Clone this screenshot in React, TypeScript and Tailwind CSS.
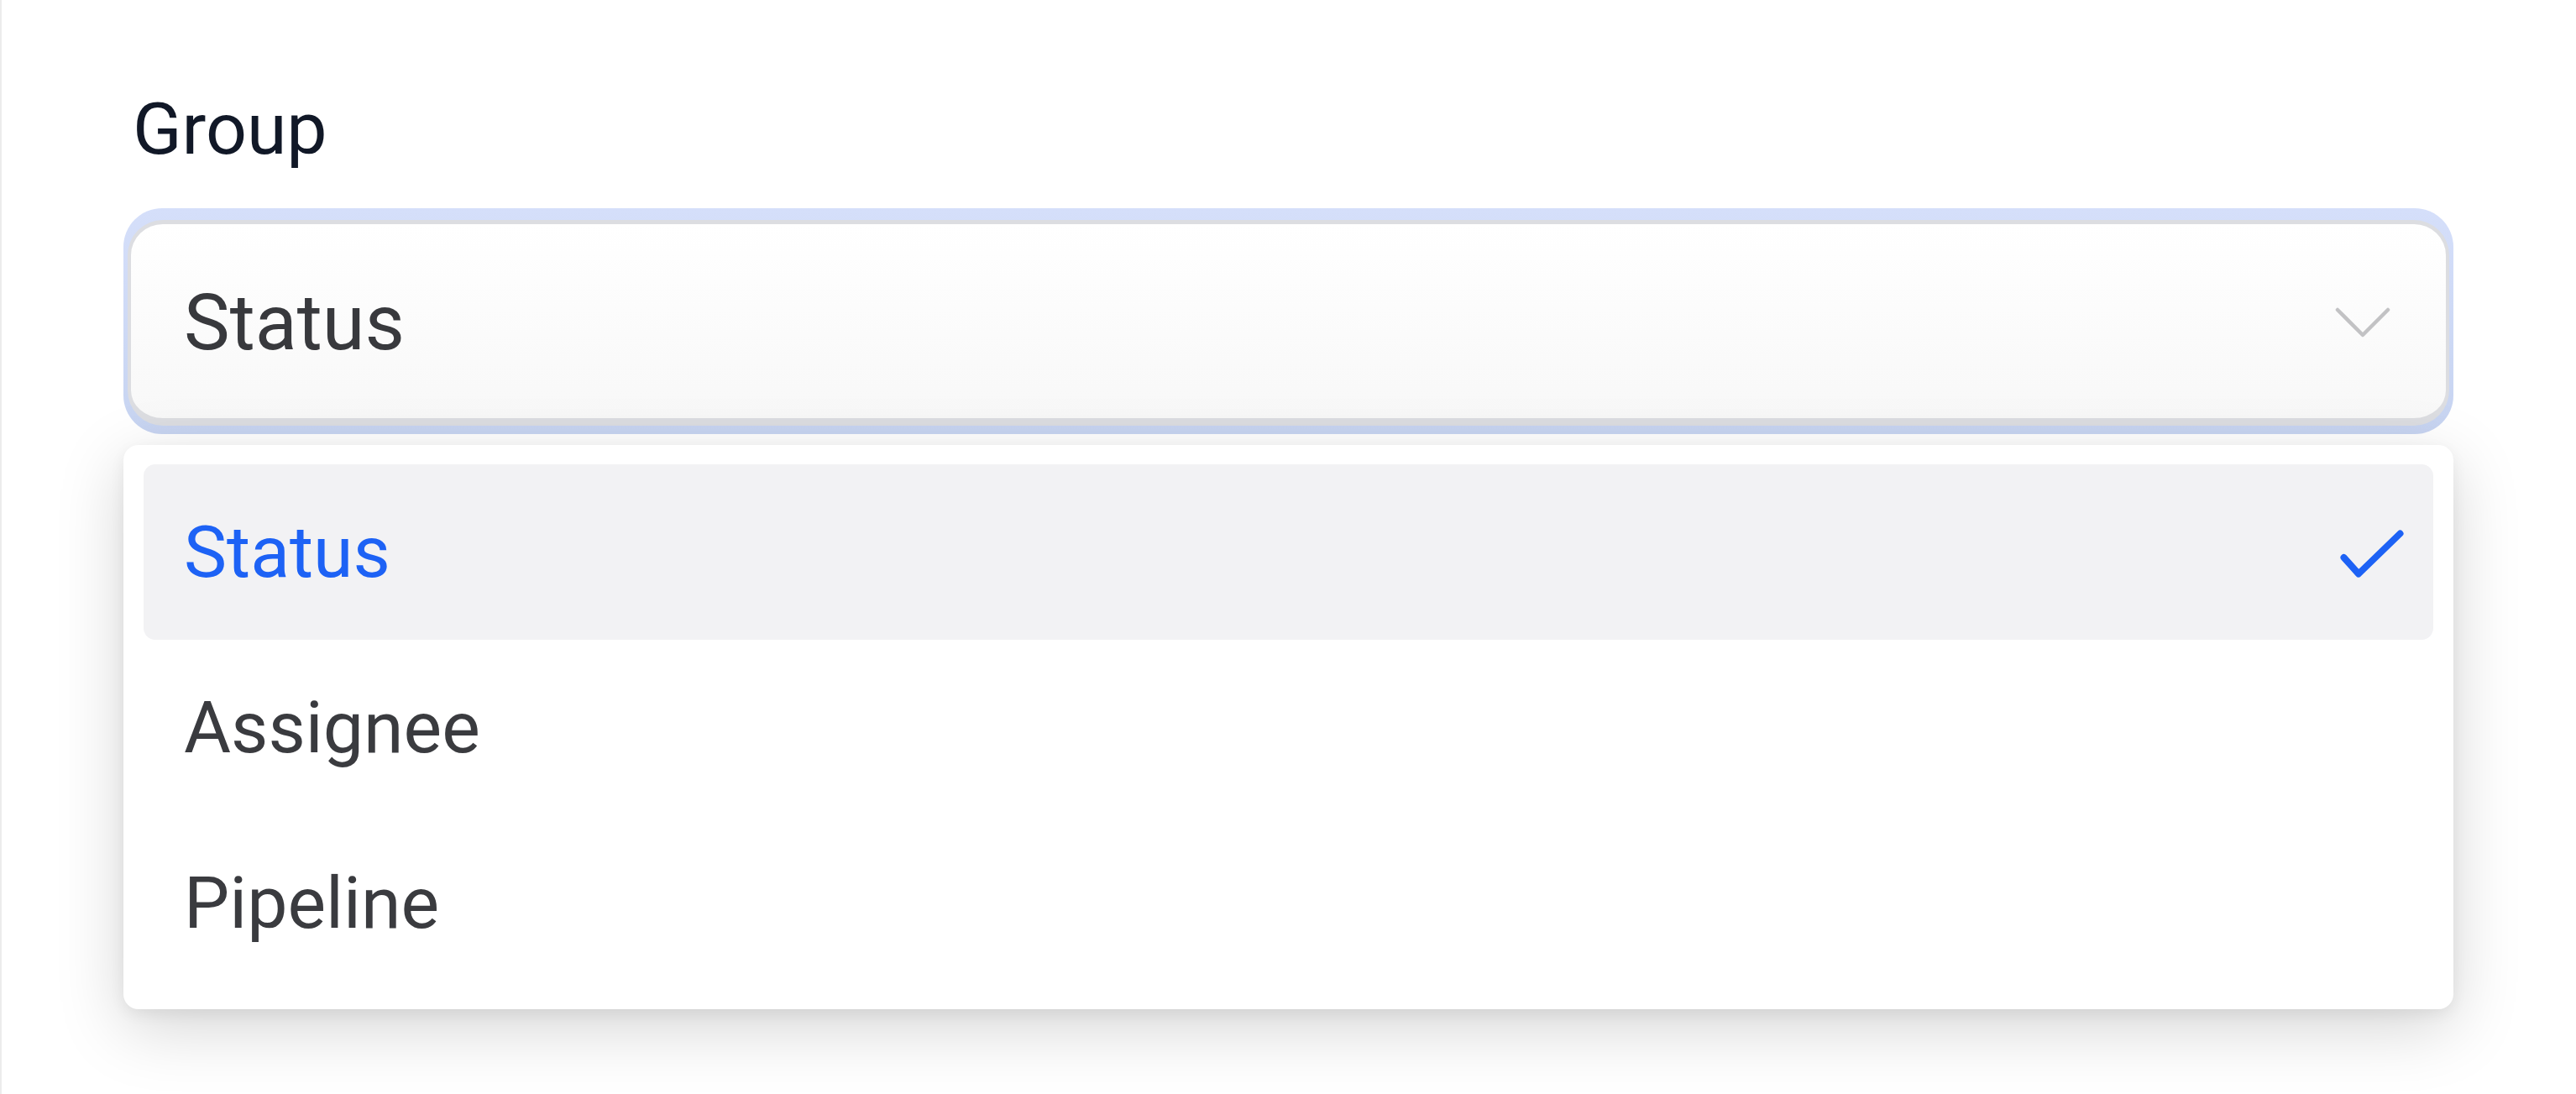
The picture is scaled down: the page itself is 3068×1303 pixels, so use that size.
import React from "react";

const items = ["Status", "Assignee", "Pipeline"];

export default function App() {
  const selected = "Status";
  return (
    <div
      className="min-h-screen w-full bg-white border-l-2 border-[#ececec] pt-[104px] pl-[145px] pr-[146px]"
      style={{ fontFamily: "Roboto, 'Noto Sans', sans-serif" }}
    >
      <div className="pl-[11px] text-[86px] leading-[100px] text-[#111827]">Group</div>

      <div className="mt-[44px] rounded-[46px] bg-gradient-to-b from-[#d5dffa] to-[#c7d4f1] pt-[14px] pb-[10px] px-[5px]">
        <div className="flex h-[245px] items-center justify-between rounded-[42px] border-t-[5px] border-x-[4px] border-b-[9px] border-[#dcdde1] bg-gradient-to-b from-white to-[#f8f8f8] pl-[63px] pr-[66px] pt-[4px]">
          <span className="text-[92px] leading-[100px] text-[#38393d]">Status</span>
          <svg width="66" height="38" viewBox="0 0 66 38" fill="none">
            <polyline
              points="3,3 33,33 63,3"
              stroke="#c2c2c4"
              strokeWidth="4.5"
              strokeLinecap="round"
              strokeLinejoin="round"
            />
          </svg>
        </div>
      </div>

      <div className="mt-[13px] rounded-[18px] bg-white px-[24px] pt-[23px] pb-[22px] shadow-[0_22px_80px_rgba(0,0,0,0.17),0_6px_18px_rgba(0,0,0,0.06)]">
        {items.map((it) => {
          const active = it === selected;
          return (
            <div
              key={it}
              className={
                active
                  ? "flex h-[209px] items-center justify-between rounded-[14px] bg-[#f2f2f4] pl-[48px] pr-[33px]"
                  : "flex h-[209px] items-center justify-between rounded-[14px] pl-[48px] pr-[33px]"
              }
            >
              <span
                className={
                  active
                    ? "text-[86px] leading-[100px] text-[#1d62f5]"
                    : "text-[86px] leading-[100px] text-[#3a3b3f]"
                }
              >
                {it}
              </span>
              {active && (
                <svg width="80" height="74" viewBox="0 0 80 74" fill="none">
                  <polyline
                    points="6.5,43 24,62.5 73.5,14.5"
                    stroke="#1d62f5"
                    strokeWidth="8"
                    strokeLinecap="round"
                    strokeLinejoin="round"
                  />
                </svg>
              )}
            </div>
          );
        })}
      </div>
    </div>
  );
}
